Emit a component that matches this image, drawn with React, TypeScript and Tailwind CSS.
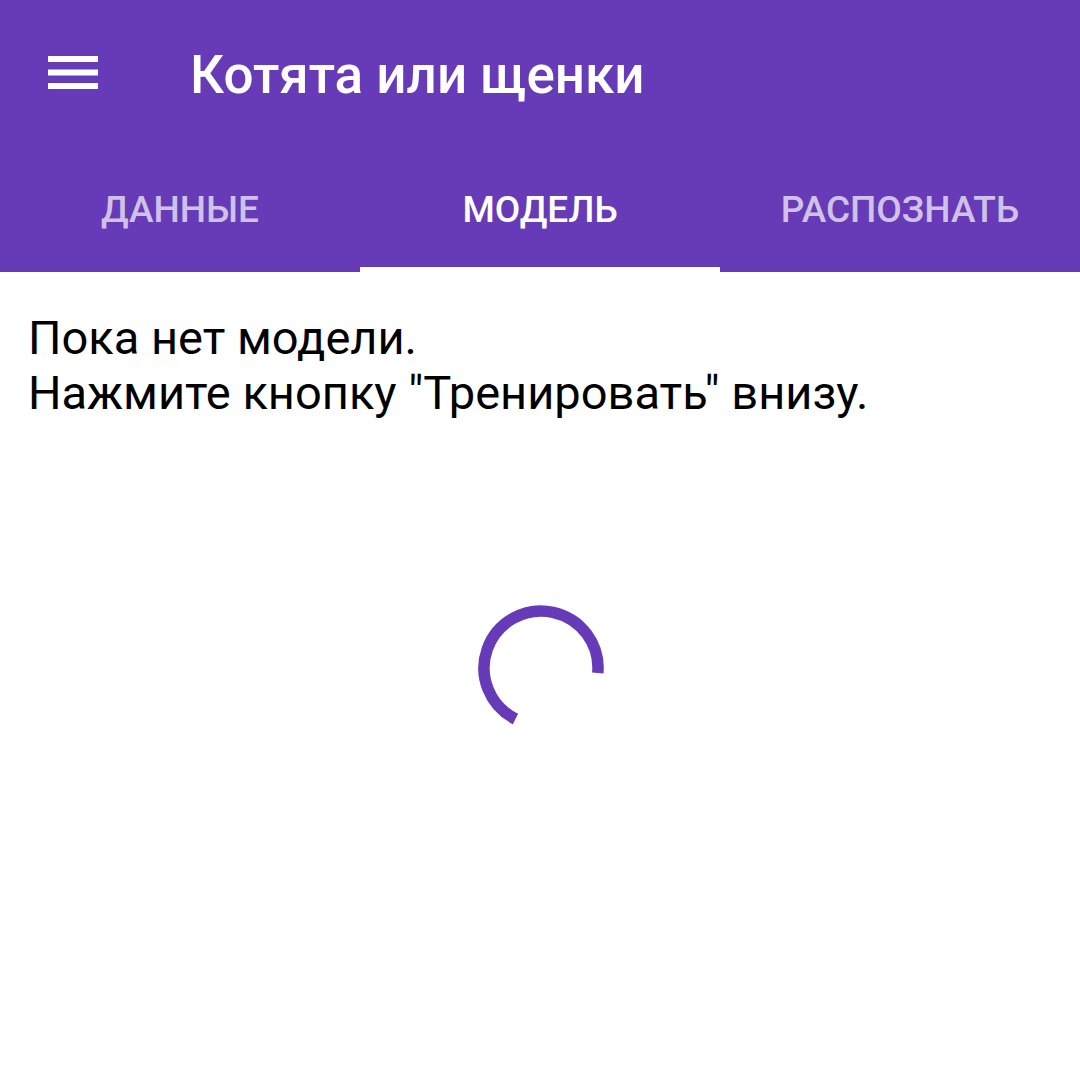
import { useState } from 'react'

const tabs = ['ДАННЫЕ', 'МОДЕЛЬ', 'РАСПОЗНАТЬ']

const MenuIcon = () => (
  <svg width="50" height="34" viewBox="0 0 50 34" className="shrink-0">
    <rect x="0" y="0" width="50" height="6" fill="white" />
    <rect x="0" y="13.5" width="50" height="6" fill="white" />
    <rect x="0" y="27" width="50" height="6" fill="white" />
  </svg>
)

const Spinner = () => (
  <svg width="140" height="140" viewBox="0 0 140 140">
    <path
      d="M 126.8 75 A 57 57 0 1 0 44.5 121"
      fill="none"
      stroke="#673AB7"
      strokeWidth="11.5"
    />
  </svg>
)

export default function App() {
  const [active, setActive] = useState(1)

  return (
    <div className="flex h-[1080px] w-[1080px] flex-col bg-white font-['Roboto','Noto_Sans',sans-serif]">
      <header className="bg-[#673AB7]">
        <div className="flex h-[146px] items-center pl-[48px]">
          <MenuIcon />
          <h1 className="ml-[92px] mt-[4px] text-[53px] font-medium leading-none text-white">
            Котята или щенки
          </h1>
        </div>
        <nav className="grid h-[126px] grid-cols-3">
          {tabs.map((tab, i) => (
            <button
              key={tab}
              type="button"
              onClick={() => setActive(i)}
              className={`flex flex-col ${i === active ? 'text-white' : 'text-white/70'}`}
            >
              <span className="flex flex-1 items-center justify-center pt-[6px] text-[37px] font-medium leading-none">
                {tab}
              </span>
              <span className={`h-[5px] w-full ${i === active ? 'bg-white' : ''}`} />
            </button>
          ))}
        </nav>
      </header>

      <main className="flex flex-1 flex-col">
        <p className="px-[28px] pt-[38px] text-[47px] leading-[55px] text-black">
          Пока нет модели.
          <br />
          Нажмите кнопку "Тренировать" внизу.
        </p>
        <div className="mt-[178px] flex justify-center pl-[2px]">
          <Spinner />
        </div>
      </main>
    </div>
  )
}
